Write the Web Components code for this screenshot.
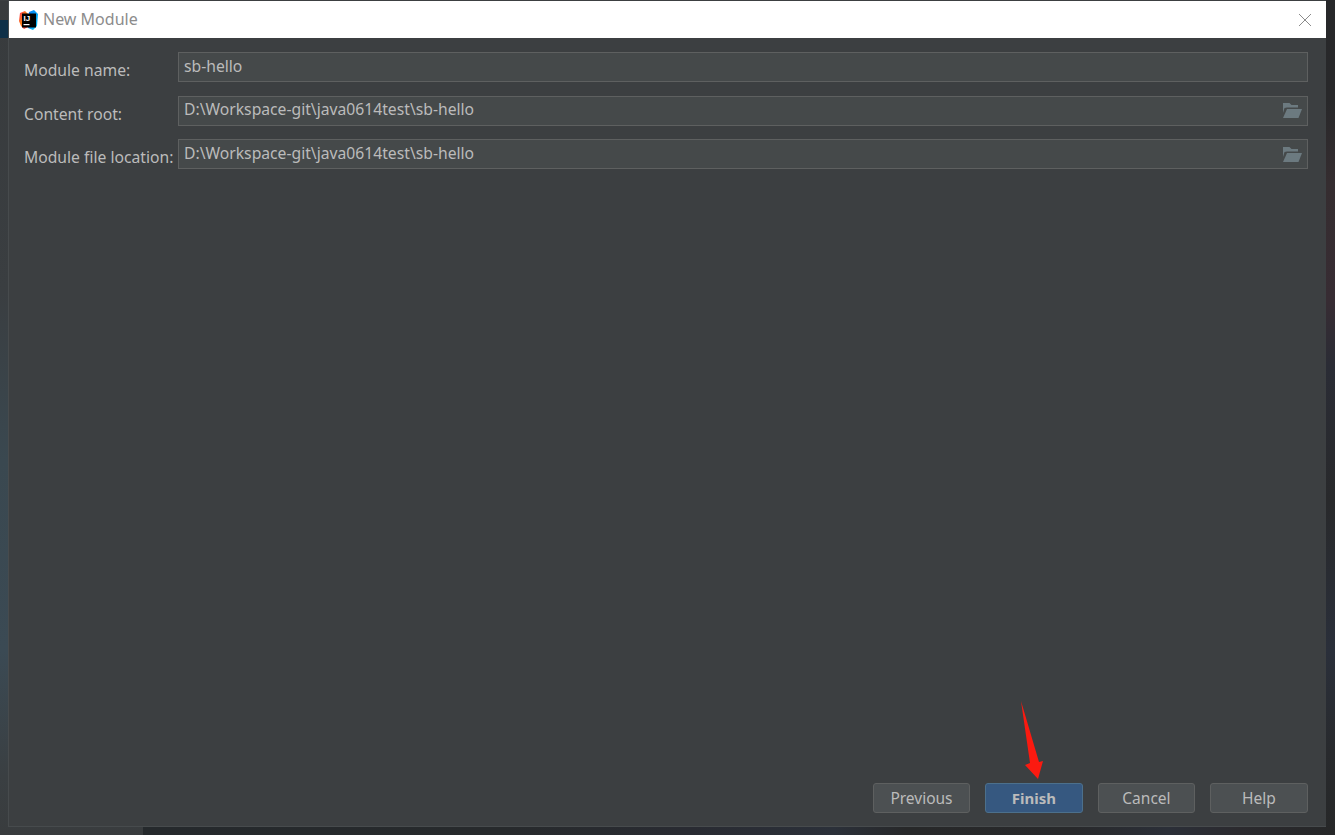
<!DOCTYPE html>
<html>
<head>
<meta charset="utf-8">
<title>New Module</title>
<style>
  html, body { margin: 0; height: 100%; }
  body { font-family: "Noto Sans", "Open Sans", sans-serif; overflow: hidden; }
</style>
</head>
<body>
<ide-backdrop>
  <module-dialog title-text="New Module">
    <form-field label="Module name:" value="sb-hello"></form-field>
    <form-field label="Content root:" value="D:\Workspace-git\java0614test\sb-hello" browse></form-field>
    <form-field label="Module file location:" value="D:\Workspace-git\java0614test\sb-hello" browse></form-field>
    <dialog-button slot="buttons">Previous</dialog-button>
    <dialog-button slot="buttons" primary>Finish</dialog-button>
    <dialog-button slot="buttons">Cancel</dialog-button>
    <dialog-button slot="buttons">Help</dialog-button>
  </module-dialog>
</ide-backdrop>

<script>
class IdeBackdrop extends HTMLElement {
  constructor() {
    super();
    this.attachShadow({ mode: "open" });
    this.shadowRoot.innerHTML = `
<style>
  :host {
    display: block;
    position: relative;
    width: 1335px;
    height: 835px;
    box-sizing: border-box;
    padding: 1px 9px 8px 9px;
    background: linear-gradient(#383b3d, #3a3e41 35%, #3a4850 55%, #3b4a54 78%, #3a3f42 93%, #393c3e);
  }
  .right {
    position: absolute;
    top: 0;
    right: 0;
    width: 9px;
    height: 100%;
    background: linear-gradient(#27282a, #28282a 12%, #352d30 22%, #372c33 36%, #2a2c35 44%, #28292b 60%, #2a2f3a 78%, #282a2d 90%, #262728);
  }
  .top {
    position: absolute;
    top: 0;
    left: 0;
    width: 100%;
    height: 1px;
    background: #3c3f41;
  }
  .bottom {
    position: absolute;
    left: 143px;
    right: 0;
    bottom: 0;
    height: 8px;
    background: linear-gradient(90deg, #25292c, #272a2c 30%, #292b32 46%, #2b3039 58%, #272829 64%, #28292b 78%, #2b2f38 86%, #2b2a2e 92%, #262728);
  }
  .tab {
    position: absolute;
    left: 0;
    top: 20px;
    width: 9px;
    height: 18px;
    padding-top: 0;
    background: #0f3048;
    color: #b9c4cc;
    font-size: 15px;
    line-height: 52px;
    height: 38px;
    overflow: hidden;
    display: none;
  }
  .tab.on {
    display: block;
    top: 20px;
    height: 18px;
    line-height: 50px;
    background: none;
  }
  .tabbg {
    position: absolute;
    left: 0;
    top: 20px;
    width: 9px;
    height: 18px;
    background: #0f3048;
    color: #b9c4cc;
    font-size: 15px;
    line-height: 50px;
    overflow: hidden;
  }
</style>
<div class="top"></div>
<div class="right"></div>
<div class="bottom"></div>
<div class="tabbg">6</div>
<slot></slot>`;
  }
}

class ModuleDialog extends HTMLElement {
  constructor() {
    super();
    this.attachShadow({ mode: "open" });
    this.shadowRoot.innerHTML = `
<style>
  :host {
    display: flex;
    flex-direction: column;
    position: relative;
    height: 826px;
    box-sizing: border-box;
    background: #3c3f41;
    border-bottom: 1px solid #474b4d;
    box-shadow: -1px 0 0 #474b4d;
  }
  header {
    display: flex;
    align-items: center;
    flex: none;
    height: 37px;
    padding: 0 15px 0 10px;
    background: #fff;
    color: #8c8c8c;
    font-size: 16px;
  }
  header svg.logo { margin-right: 5px; }
  header span { flex: 1; margin-top: -1px; }
  .fields {
    flex: 1;
    display: flex;
    flex-direction: column;
    gap: 13.5px;
    padding: 14px 18px 0 15px;
  }
  .buttons {
    display: flex;
    justify-content: flex-end;
    gap: 15px;
    padding: 0 18.3px 13px 0;
  }
  .arrow {
    position: absolute;
    left: 1005px;
    top: 698px;
  }
</style>
<header>
  <svg class="logo" width="19" height="20" viewBox="0 0 19 20">
    <defs>
      <linearGradient id="lg" x1="0" y1="0" x2="1" y2="1">
        <stop offset="0" stop-color="#fe315d"/>
        <stop offset="0.45" stop-color="#f97a12"/>
        <stop offset="1" stop-color="#fe2857"/>
      </linearGradient>
      <linearGradient id="rg" x1="0" y1="0" x2="1" y2="1">
        <stop offset="0" stop-color="#087cfa"/>
        <stop offset="1" stop-color="#07c3f2"/>
      </linearGradient>
    </defs>
    <path d="M1 3 L6 1 L9 4 L9 17 L5 19 L2 16 L0 11Z" fill="url(#lg)"/>
    <path d="M10 2 L15 0 L19 4 L18 16 L14 20 L9 18Z" fill="url(#rg)"/>
    <rect x="3" y="3.5" width="14" height="14" fill="#000"/>
    <text x="4.6" y="11" font-family="'Liberation Sans', sans-serif" font-size="8" font-weight="700" fill="#fff">IJ</text>
    <rect x="4.5" y="14" width="6" height="1.2" fill="#fff"/>
  </svg>
  <span></span>
  <svg width="14" height="14" viewBox="0 0 14 14" style="margin-right:-1px">
    <path d="M1 1 L13 13 M13 1 L1 13" stroke="#8b8b8b" stroke-width="1" fill="none"/>
  </svg>
</header>
<div class="fields"><slot></slot></div>
<div class="buttons"><slot name="buttons"></slot></div>
<svg class="arrow" width="45" height="85" viewBox="0 0 45 85">
  <path d="M7 2 L25 63 L29 62 L24 80 L11 66 L16 64 Z" fill="#fb1a10"/>
</svg>`;
    this.shadowRoot.querySelector("header span").textContent = this.getAttribute("title-text");
  }
}

class FormField extends HTMLElement {
  constructor() {
    super();
    this.attachShadow({ mode: "open" });
    this.shadowRoot.innerHTML = `
<style>
  :host {
    display: flex;
    height: 30px;
    color: #bbbbbb;
    font-size: 15.7px;
  }
  label {
    flex: none;
    width: 154px;
    padding-top: 7px;
    line-height: 22px;
    white-space: nowrap;
  }
  .box {
    flex: 1;
    display: flex;
    align-items: center;
    justify-content: space-between;
    box-sizing: border-box;
    padding: 0 5px 3px 5px;
    background: #45494a;
    border: 2px solid #5e6060;
    border-width: 1px;
    line-height: 22px;
  }
  svg { margin-top: 3px; }
</style>
<label></label>
<div class="box"><span></span></div>`;
    this.shadowRoot.querySelector("label").textContent = this.getAttribute("label");
    this.shadowRoot.querySelector(".box span").textContent = this.getAttribute("value");
    if (this.hasAttribute("browse")) {
      this.shadowRoot.querySelector(".box").insertAdjacentHTML("beforeend", `
<svg width="19" height="15" viewBox="0 0 19 15">
  <path d="M0 0 H6.5 L8.5 2 H15 V4.5 H4 L1.5 5 L0 10 Z" fill="#6c7a80"/>
  <path d="M4 6 H19 L15.5 15 H0 Z" fill="#6c7a80"/>
</svg>`);
    }
  }
}

class DialogButton extends HTMLElement {
  constructor() {
    super();
    this.attachShadow({ mode: "open" });
    this.shadowRoot.innerHTML = `
<style>
  :host {
    display: flex;
    align-items: center;
    justify-content: center;
    box-sizing: border-box;
    width: 97.5px;
    height: 30px;
    padding-bottom: 1px;
    background: #4c5052;
    border: 1px solid #5e6060;
    border-radius: 3px;
    color: #bbbbbb;
    font-size: 15.5px;
  }
  :host([primary]) {
    background: #365880;
    border-color: #4c708c;
    font-size: 15px;
    font-weight: 700;
  }
</style>
<slot></slot>`;
  }
}

customElements.define("ide-backdrop", IdeBackdrop);
customElements.define("module-dialog", ModuleDialog);
customElements.define("form-field", FormField);
customElements.define("dialog-button", DialogButton);
</script>
</body>
</html>
